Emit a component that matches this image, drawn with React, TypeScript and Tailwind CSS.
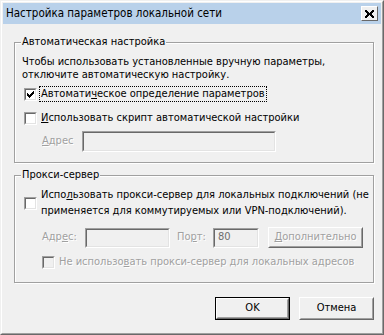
import React from "react";

function Check({ checked, disabled }: { checked?: boolean; disabled?: boolean }) {
  return (
    <div className="w-[13px] h-[13px] shrink-0 border border-t-[#a0a0a0] border-l-[#a0a0a0] border-r-white border-b-white">
      <div
        className={`w-full h-full border border-t-[#696969] border-l-[#696969] border-r-[#e3e3e3] border-b-[#e3e3e3] flex items-center justify-center ${
          disabled ? "bg-[#f0f0f0]" : "bg-white"
        }`}
      >
        {checked && (
          <svg width="7" height="7" viewBox="0 0 7 7" shapeRendering="crispEdges">
            <path d="M6 0h1v1H6z M5 1h2v1H5z M0 2h1v1H0z M4 2h3v1H4z M0 3h2v1H0z M3 3h3v1H3z M0 4h5v1H0z M1 5h3v1H1z M2 6h1v1H2z" fill="#000" />
          </svg>
        )}
      </div>
    </div>
  );
}

function Sunken({ className, children }: { className?: string; children?: React.ReactNode }) {
  return (
    <div className={`border border-t-[#a0a0a0] border-l-[#a0a0a0] border-r-white border-b-white ${className ?? ""}`}>
      <div className="w-full h-full border border-t-[#696969] border-l-[#696969] border-r-[#e3e3e3] border-b-[#e3e3e3] bg-[#f0f0f0] flex items-center pl-[3px] text-[#6d6d6d]">
        {children}
      </div>
    </div>
  );
}

function Button({ className, children, isDefault, disabled }: { className?: string; children?: React.ReactNode; isDefault?: boolean; disabled?: boolean }) {
  const inner = (
    <div className="w-full h-full border border-t-white border-l-white border-r-[#696969] border-b-[#696969]">
      <div className="w-full h-full border border-t-[#f0f0f0] border-l-[#f0f0f0] border-r-[#a0a0a0] border-b-[#a0a0a0] flex items-center justify-center">
        <span className={disabled ? "text-[#a0a0a0] [text-shadow:1px_1px_0_#fff]" : "text-black"}>{children}</span>
      </div>
    </div>
  );
  if (isDefault) {
    return <div className={`border border-black ${className ?? ""}`}>{inner}</div>;
  }
  return <div className={className}>{inner}</div>;
}

function Group({ title, className, children }: { title: string; className?: string; children?: React.ReactNode }) {
  return (
    <div className={`relative border border-[#a0a0a0] shadow-[inset_1px_1px_0_#fff,1px_1px_0_#fff] ${className ?? ""}`}>
      <div className="absolute left-[6px] top-[-8px] bg-[#f0f0f0] px-[1px] leading-[14px] text-black">{title}</div>
      {children}
    </div>
  );
}

export default function App() {
  const dis = "text-[#a0a0a0] [text-shadow:1px_1px_0_#fff]";
  return (
    <div className="w-[384px] h-[335px] bg-[#f0f0f0] font-['DejaVu_Sans_Condensed','DejaVu_Sans',sans-serif] font-stretch-condensed text-[11px] text-black whitespace-nowrap">
      <div className="w-[384px] h-[335px] border border-t-[#f0f0f0] border-l-[#f0f0f0] border-r-[#696969] border-b-[#696969]">
        <div className="w-full h-full border border-t-white border-l-white border-r-[#a0a0a0] border-b-[#a0a0a0] p-[1px] flex flex-col">
          {/* Title bar */}
          <div className="h-[21px] shrink-0 bg-[#b9d1ea] flex items-center pl-[3px] pr-[3px]">
            <span className="text-[11.5px] text-black leading-none flex-1">Настройка параметров локальной сети</span>
            <div className="w-[17px] h-[15px] border border-t-white border-l-white border-r-[#696969] border-b-[#696969] bg-[#f0f0f0] flex items-center justify-center">
              <svg width="9" height="8" viewBox="0 0 9 8" shapeRendering="crispEdges">
                <path d="M0 0 L9 8 M9 0 L0 8" stroke="#000" strokeWidth="2" />
              </svg>
            </div>
          </div>
          {/* Body */}
          <div className="flex-1 flex flex-col pl-[11px] pr-[7px]">
            <Group title="Автоматическая настройка" className="mt-[18px] h-[121px]">
              <div className="pl-[7px] pt-[12px] leading-[13px]">
                <div>Чтобы использовать установленные вручную параметры,</div>
                <div>отключите автоматическую настройку.</div>
              </div>
              <div className="mt-[5px] ml-[9px] h-[16px] flex items-center">
                <Check checked />
                <div className="ml-[2px] border border-dotted border-black px-[1px] leading-[14px]">
                  Автомати<span className="underline">ч</span>еское определение параметров
                </div>
              </div>
              <div className="mt-[8px] ml-[9px] h-[16px] flex items-center">
                <Check />
                <div className="ml-[4px] leading-[14px]">
                  <span className="underline">И</span>спользовать скрипт автоматической настройки
                </div>
              </div>
              <div className="mt-[5px] ml-[27px] h-[21px] flex items-center">
                <span className={`w-[40px] ${dis}`}>
                  <span className="underline">А</span>дрес
                </span>
                <Sunken className="w-[194px] h-[21px]" />
              </div>
            </Group>

            <Group title="Прокси-сервер" className="mt-[12px] h-[108px]">
              <div className="mt-[11px] ml-[9px] flex items-center">
                <Check />
                <div className="ml-[4px] leading-[16px]">
                  <div>
                    Испо<span className="underline">л</span>ьзовать прокси-сервер для локальных подключений (не
                  </div>
                  <div>применяется для коммутируемых или VPN-подключений).</div>
                </div>
              </div>
              <div className="mt-[8px] ml-[27px] h-[21px] flex items-center">
                <span className={`w-[43px] ${dis}`}>
                  Адр<span className="underline">е</span>с:
                </span>
                <Sunken className="w-[85px] h-[20px]" />
                <span className={`ml-[7px] w-[36px] ${dis}`}>
                  По<span className="underline">р</span>т:
                </span>
                <Sunken className="w-[46px] h-[20px]">80</Sunken>
                <Button className="ml-[9px] w-[95px] h-[21px]" disabled>
                  <span className="underline">Д</span>ополнительно
                </Button>
              </div>
              <div className="mt-[6px] ml-[27px] h-[16px] flex items-center">
                <Check disabled />
                <span className={`ml-[4px] ${dis}`}>
                  Не использо<span className="underline">в</span>ать прокси-сервер для локальных адресов
                </span>
              </div>
            </Group>

            <div className="mt-[14px] flex justify-end gap-[9px]">
              <Button isDefault className="w-[75px] h-[23px]">OK</Button>
              <Button className="w-[75px] h-[23px]">Отмена</Button>
            </div>
          </div>
        </div>
      </div>
    </div>
  );
}
